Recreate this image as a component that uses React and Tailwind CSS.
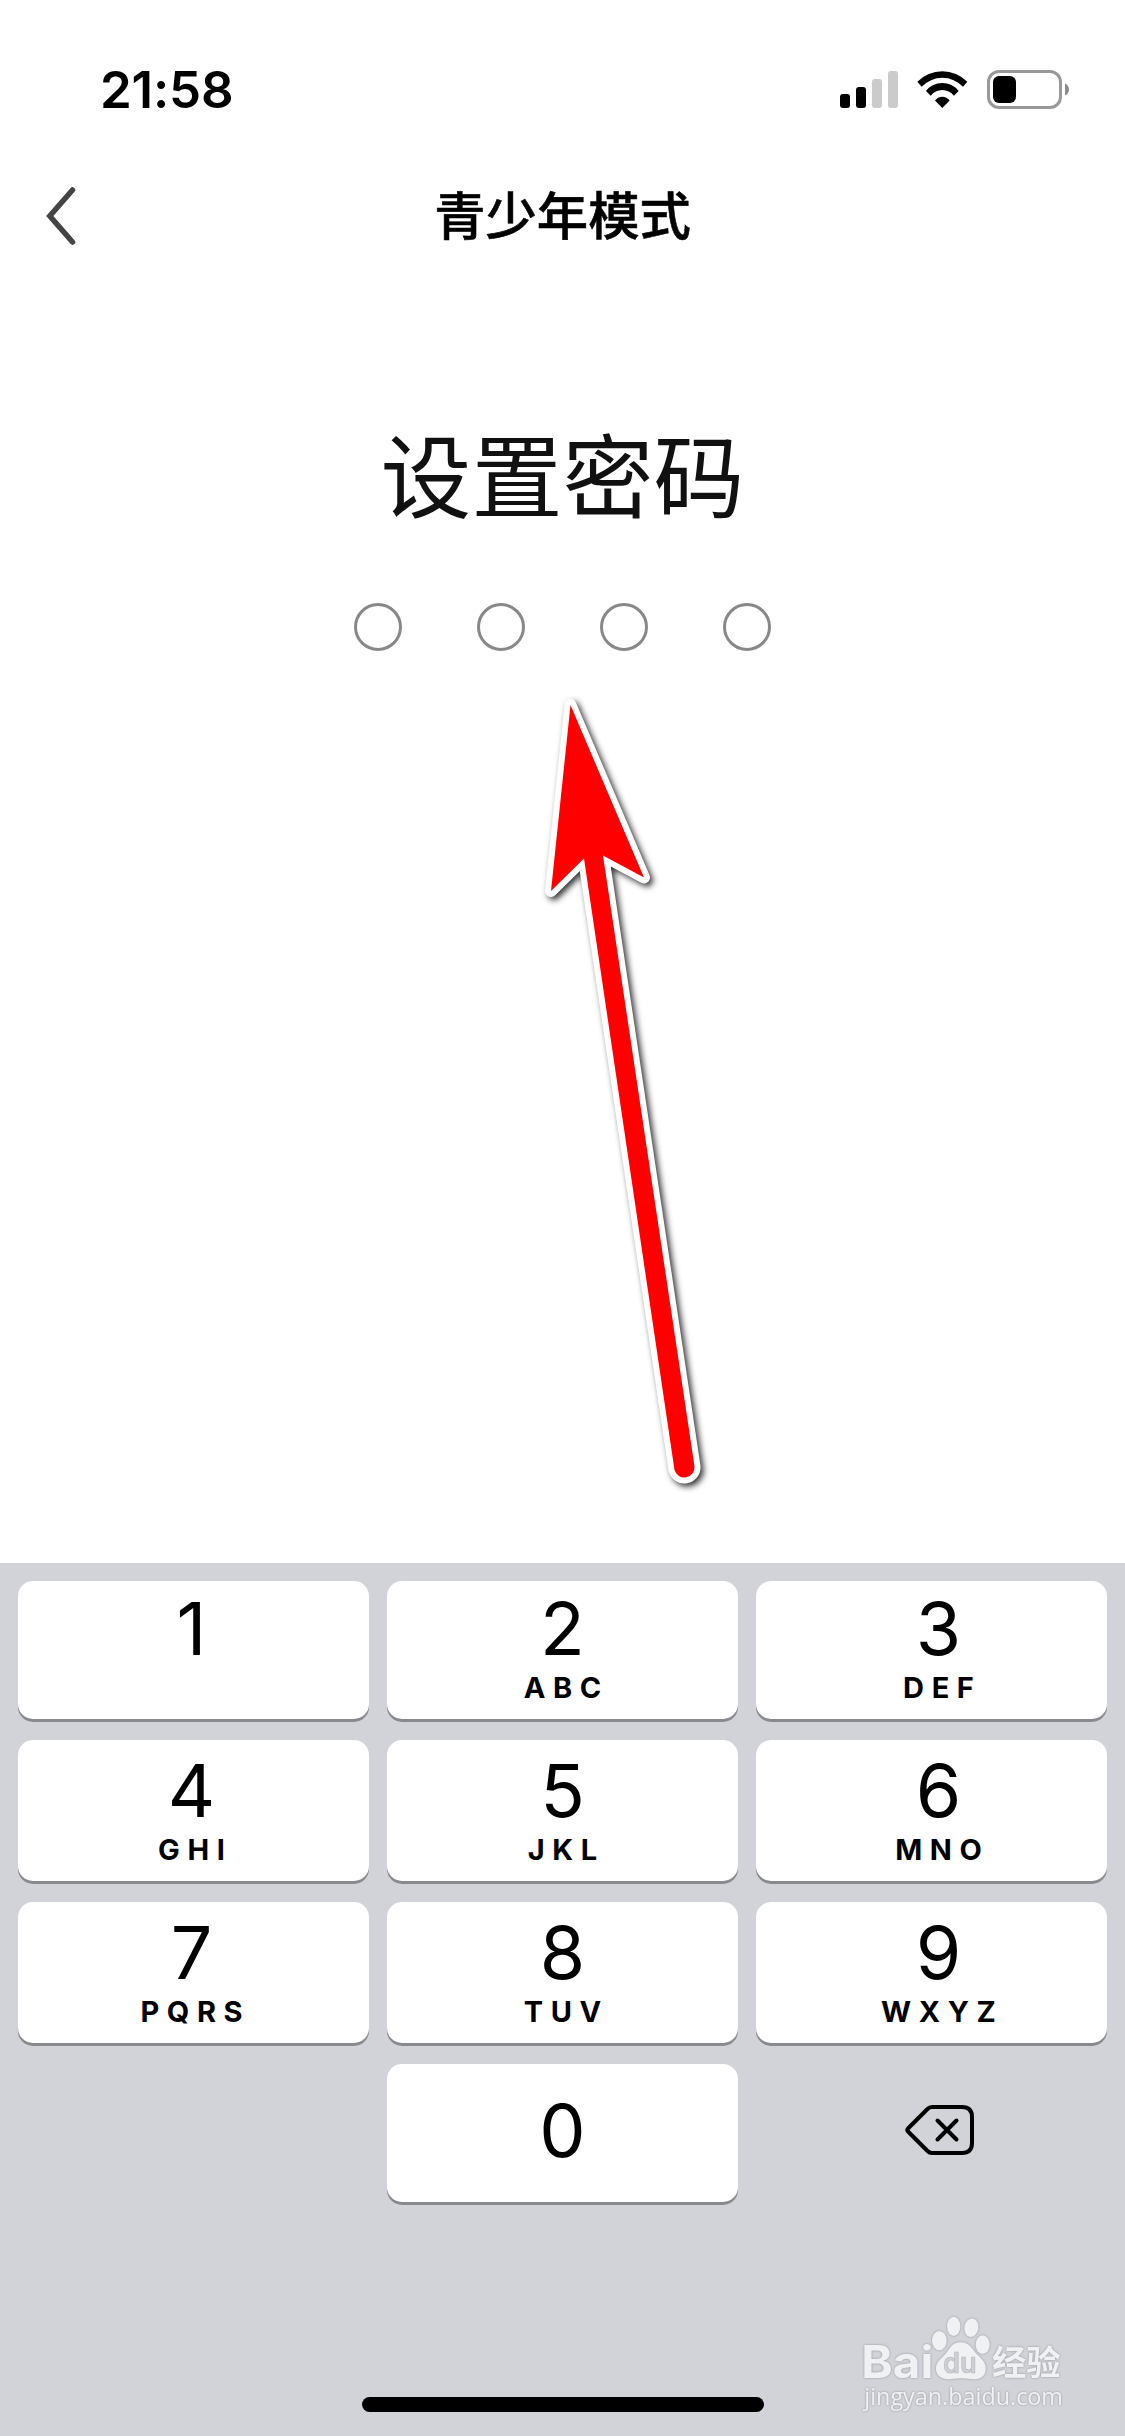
const rows = [
  [
    { digit: "1", letters: "" },
    { digit: "2", letters: "ABC" },
    { digit: "3", letters: "DEF" },
  ],
  [
    { digit: "4", letters: "GHI" },
    { digit: "5", letters: "JKL" },
    { digit: "6", letters: "MNO" },
  ],
  [
    { digit: "7", letters: "PQRS" },
    { digit: "8", letters: "TUV" },
    { digit: "9", letters: "WXYZ" },
  ],
];

const rowStyles = ["h-[138px] pt-[11px]", "h-[141px] pt-[14px]", "h-[141px] pt-[14px]"];
const columnStyles = ["pr-1", "", "pl-[14px]"];

function StatusBar() {
  return (
    <div className="flex h-[178px] shrink-0 items-center justify-between pl-[100px] pr-14">
      <span className="text-[51px] font-semibold leading-none tracking-[-0.2px]">21:58</span>
      <div className="flex items-center">
        <svg className="h-[37px] w-[58px]" viewBox="0 0 58 37">
          <rect y="23" width="10" height="14" rx="3" />
          <rect x="16" y="16" width="10" height="21" rx="3" />
          <rect x="32" y="8" width="10" height="29" rx="3" fill="#cbcbcb" />
          <rect x="48" width="10" height="37" rx="3" fill="#cbcbcb" />
        </svg>
        <svg className="ml-[19px] h-[39px] w-[51px]" viewBox="0 0 51 39">
          <path d="M.3 11.7A35 35 0 0 1 50.3 11.7L46 16.7A28.5 28.5 0 0 0 4.7 16.7Z" />
          <path d="M9 21A20.6 20.6 0 0 1 41.6 21L36.9 25.7A14.6 14.6 0 0 0 13.7 25.7Z" />
          <path d="M18 30.5A9 9 0 0 1 32.6 30.5L25.3 38Z" />
        </svg>
        <svg className="ml-[19px] h-[39px] w-[82px]" viewBox="0 0 82 39">
          <rect x="1.5" y="1.5" width="72" height="36" rx="10.5" fill="none" stroke="#999" strokeWidth="3" />
          <rect x="6" y="6" width="23" height="27" rx="6" />
          <path d="M78 13.5C80.7 14.6 82 17 82 19.5S80.7 24.4 78 25.5Z" fill="#8c8c8c" />
        </svg>
      </div>
    </div>
  );
}

function Header() {
  return (
    <header className="grid h-[76px] shrink-0 grid-cols-3 items-center">
      <svg className="ml-[46px] h-[60px] w-8" viewBox="0 0 32 60" fill="none" stroke="#444" strokeWidth="5.5" strokeLinecap="round">
        <path d="M26.5 4 3.8 30l22.7 26" />
      </svg>
      <h1 className="whitespace-nowrap text-center text-[51.3px] font-medium leading-[76px] [-webkit-text-stroke:0.6px_#000]">
        青少年模式
      </h1>
    </header>
  );
}

function Key({ digit, letters, className }) {
  return (
    <button className={`flex w-[351px] shrink-0 flex-col items-center rounded-[15px] bg-white shadow-[0_3px_0_#898a8d] ${className}`}>
      <span className="text-[73.5px] leading-[73px]">{digit}</span>
      {letters && (
        <span className="mt-[7.5px] pl-[7.6px] text-[29px] font-bold leading-[30px] tracking-[7.6px]">{letters}</span>
      )}
    </button>
  );
}

function Keypad() {
  return (
    <div className="flex h-[873px] shrink-0 flex-col bg-[#d2d3d8] px-[18px] pt-[18px]">
      <div className="flex flex-col gap-[21px]">
        {rows.map((keys, row) => (
          <div key={row} className="flex gap-[18px]">
            {keys.map((item, col) => (
              <Key key={item.digit} {...item} className={`${rowStyles[row]} ${columnStyles[col]}`} />
            ))}
          </div>
        ))}
        <div className="flex gap-[18px]">
          <div className="w-[351px]" />
          <Key digit="0" className="h-[138px] pt-[30px]" />
          <button className="flex w-[351px] items-center justify-center pb-1.5 pl-[15px]">
            <svg className="h-[50px] w-[69px]" viewBox="0 0 69 50" fill="none" stroke="#000" strokeWidth="4" strokeLinecap="round" strokeLinejoin="round">
              <path d="M27 2H57Q67 2 67 12V38Q67 48 57 48H27Q24.5 48 22.5 46L3 26.5Q1.6 25 3 23.5L22.5 4Q24.5 2 27 2Z" />
              <path d="M32.500 15.500 51.500 34.500M51.500 15.500 32.500 34.500" />
            </svg>
          </button>
        </div>
      </div>
      <div className="mx-auto mb-6 mt-auto h-[15px] w-[402px] rounded-full bg-black" />
    </div>
  );
}

function Arrow() {
  return (
    <svg className="absolute left-[530px] top-[680px] h-[830px] w-[190px]" viewBox="530 680 190 830">
      <path
        className="[filter:drop-shadow(3px_3px_3px_rgba(0,0,0,0.8))]"
        d="M570.5 705 644 877.500 603 855.500 694.500 1466.500A10.200 10.200 0 0 1 674.500 1470L584 858.500 551 891Z"
        fill="#f00"
        stroke="#fff"
        strokeWidth="12"
        strokeLinejoin="round"
        paintOrder="stroke"
      />
    </svg>
  );
}

function Watermark() {
  return (
    <svg
      className="absolute left-[840px] top-[2290px] h-[146px] w-[260px] [filter:drop-shadow(0_0_1px_rgba(110,112,125,0.65))]"
      viewBox="0 0 780 438"
      fill="#f0f1f3"
    >
      <text x="64" y="263" fontSize="134" fontWeight="700" textLength="216" lengthAdjust="spacingAndGlyphs">Bai</text>
      <ellipse cx="298" cy="152" rx="22" ry="29" />
      <ellipse cx="341" cy="109" rx="20" ry="29" />
      <ellipse cx="394" cy="113" rx="21" ry="28" transform="rotate(10 394 113)" />
      <ellipse cx="428" cy="164" rx="21" ry="28" />
      <path d="M362 157C390 157 397 179 411 193C428 210 440 220 437 242C433 264 413 270 393 267C372 264 353 264 334 267C313 270 292 263 288 241C285 216 304 207 318 190C331 174 336 157 362 157Z" />
      <text x="309" y="250" fontSize="86" fontWeight="600" fill="#cfd0d5" stroke="#b4b5bb" strokeWidth="2" textLength="101" lengthAdjust="spacingAndGlyphs">du</text>
      <text x="456" y="254" fontSize="104" fontWeight="700" textLength="206" lengthAdjust="spacingAndGlyphs">经验</text>
      <text className="font-['Open_Sans']" x="73" y="345" fontSize="69" textLength="596" lengthAdjust="spacingAndGlyphs">jingyan.baidu.com</text>
    </svg>
  );
}

export default function App() {
  return (
    <main className="relative flex h-[2436px] w-[1125px] flex-col overflow-hidden bg-white font-['Inter','Noto_Sans_CJK_SC',sans-serif] text-black">
      <StatusBar />
      <Header />
      <section className="mt-[176px] flex flex-1 flex-col items-center">
        <h2 className="text-[91px] leading-[96px] text-[#111]">设置密码</h2>
        <div className="mt-[77px] flex gap-[75px]">
          {[0, 1, 2, 3].map((i) => (
            <span key={i} className="size-12 rounded-full border-[3px] border-[#888]" />
          ))}
        </div>
      </section>
      <Keypad />
      <Arrow />
      <Watermark />
    </main>
  );
}
